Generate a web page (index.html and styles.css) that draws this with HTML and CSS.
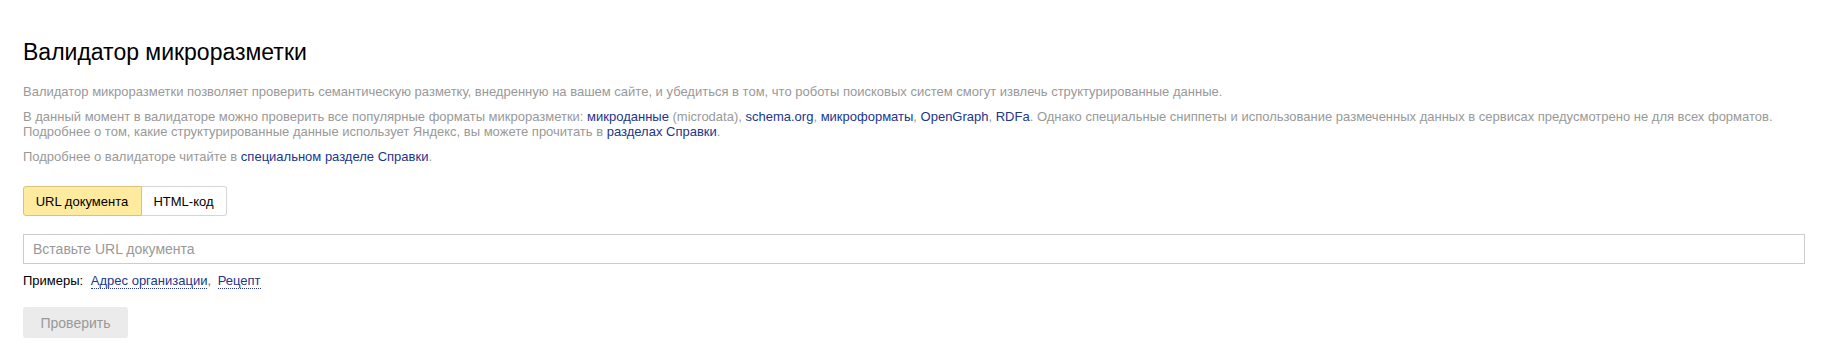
FILE: index.html
```html
<!DOCTYPE html>
<html lang="ru">

<head>
    <meta charset="UTF-8">
    <meta name="viewport" content="width=device-width, initial-scale=1.0">
    <title>Валидатор микроразметки</title>
    <link rel="stylesheet" href="styles.css">
</head>

<body>
    <main class="validator">
        <h1 class="title">Валидатор микроразметки</h1>
        <div class="about">
            <p>Валидатор микроразметки позволяет проверить семантическую разметку, внедренную на вашем сайте, и убедиться в том, что роботы поисковых систем смогут извлечь структурированные данные.</p>
            <p>В данный момент в валидаторе можно проверить все популярные форматы микроразметки: <a href="#">микроданные</a> (microdata), <a href="#">schema.org</a>, <a href="#">микроформаты</a>, <a href="#">OpenGraph</a>, <a href="#">RDFa</a>. Однако специальные сниппеты и использование размеченных данных в сервисах предусмотрено не для всех форматов.<br>Подробнее о том, какие структурированные данные использует Яндекс, вы можете прочитать в <a href="#">разделах Справки</a>.</p>
            <p>Подробнее о валидаторе читайте в <a href="#">специальном разделе Справки</a>.</p>
        </div>
        <div class="tabs">
            <button class="tab active">URL документа</button>
            <button class="tab">HTML-код</button>
        </div>
        <input class="url" type="text" placeholder="Вставьте URL документа">
        <div class="examples">
            <span class="label">Примеры:</span>
            <a href="#" class="pseudo">Адрес организации</a>,
            <a href="#" class="pseudo">Рецепт</a>
        </div>
        <button class="button check" disabled>Проверить</button>
    </main>
</body>

</html>
```

FILE: styles.css
```css
html,
body {
    margin: 0;
    font-family: "Liberation Sans", Arial, sans-serif;
    background-color: #fff;
    color: #000;
}

:root {
    --muted-color: #999;
    --link-color: #22358d;
    --border-color: #ccc;
    --active-color: #ffeba0;
    --active-border: #d9c27a;
}

.validator {
    padding: 38px 18px 0 23px;
}

.title {
    font-size: 23px;
    font-weight: normal;
    line-height: 28px;
    margin: 0 0 18px;
}

.about {
    font-size: 13px;
    line-height: 15px;
    color: var(--muted-color);
}

.about p {
    margin: 0 0 10px;
}

.about a {
    color: var(--link-color);
    text-decoration: none;
}

.tabs {
    display: flex;
    margin-top: 22px;
}

.tab {
    height: 30px;
    padding: 0 12px 0 11px;
    font-family: inherit;
    font-size: 13px;
    color: #000;
    background-color: #fff;
    border: 1px solid #d5d5d5;
    cursor: pointer;
}

.tab:first-child {
    border-radius: 3px 0 0 3px;
    width: 119px;
}

.tab:last-child {
    border-left: none;
    border-radius: 0 3px 3px 0;
    width: 85px;
}

.tab.active {
    background-color: var(--active-color);
    border-color: var(--active-border);
}

.url {
    display: block;
    box-sizing: border-box;
    width: 100%;
    height: 30px;
    margin-top: 18px;
    padding: 0 9px;
    font-family: inherit;
    font-size: 14px;
    border: 1px solid var(--border-color);
    outline: none;
}

.url::placeholder {
    color: var(--muted-color);
}

.examples {
    margin-top: 9px;
    font-size: 13px;
    line-height: 15px;
    color: #666;
}

.examples .label {
    color: #000;
    margin-right: 4px;
}

.examples .pseudo {
    color: var(--link-color);
    text-decoration: none;
    border-bottom: 1px dotted var(--link-color);
}

.examples .pseudo + .pseudo {
    margin-left: 3px;
}

.button {
    display: block;
    margin-top: 19px;
    height: 31px;
    width: 105px;
    font-family: inherit;
    font-size: 14px;
    border: none;
    border-radius: 3px;
}

.button:disabled {
    background-color: #ebebeb;
    color: var(--muted-color);
}
```
